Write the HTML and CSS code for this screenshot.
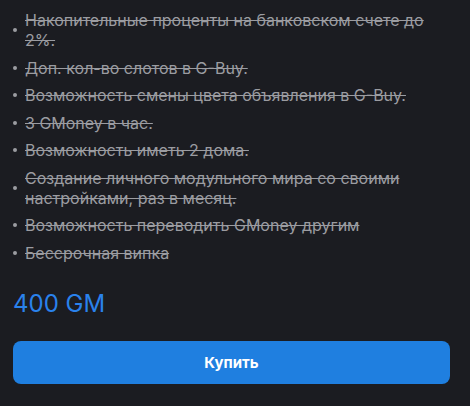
FILE: index.html
```html
<!DOCTYPE html>
<html lang="ru">
<head>
    <meta charset="UTF-8">
    <title>Привилегии</title>
    <link rel="stylesheet" href="styles.css">
</head>
<body>
    <div class="perk-card">
        <ul class="perk-list">
            <li class="perk-item">Накопительные проценты на банковском счете до 2%.</li>
            <li class="perk-item">Доп. кол-во слотов в G-Buy.</li>
            <li class="perk-item">Возможность смены цвета объявления в G-Buy.</li>
            <li class="perk-item">3 GMoney в час.</li>
            <li class="perk-item">Возможность иметь 2 дома.</li>
            <li class="perk-item">Создание личного модульного мира со своими настройками, раз в месяц.</li>
            <li class="perk-item">Возможность переводить GMoney другим</li>
            <li class="perk-item">Бессрочная випка</li>
        </ul>

        <div class="perk-price">400 GM</div>

        <button class="buy-button">Купить</button>
    </div>
</body>
</html>
```

FILE: styles.css
```css
* {
    margin: 0;
    padding: 0;
    box-sizing: border-box;
    font-family: Inter, 'Noto Sans', sans-serif;
}

body {
    background: #1b1c21;
    min-height: 100vh;
    color: #9b9ca1;
}

.perk-card {
    padding: 10px 20px 0 13px;
}

.perk-list {
    list-style: none;
    display: flex;
    flex-direction: column;
    gap: 7.5px;
}

.perk-item {
    display: flex;
    align-items: center;
    gap: 8px;
    font-size: 16px;
    line-height: 20px;
    text-decoration: line-through;
}

.perk-item::before {
    content: '';
    flex: none;
    width: 4px;
    height: 4px;
    border-radius: 50%;
    background: #9b9ca1;
}

.perk-price {
    margin-top: 26px;
    font-size: 24px;
    line-height: 30px;
    color: #2a82ec;
}

.buy-button {
    display: block;
    width: 100%;
    height: 43px;
    margin-top: 22px;
    border: none;
    border-radius: 8px;
    background: #1f7fe0;
    color: #fff;
    font-size: 15px;
    font-weight: 700;
    cursor: pointer;
}
```
